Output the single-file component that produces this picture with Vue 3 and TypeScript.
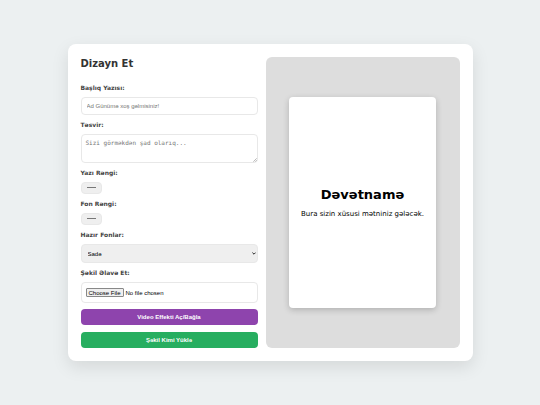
<script setup lang="ts">
import { ref } from 'vue'

const title = ref('')
const description = ref('')
const textColor = ref('#000000')
const backColor = ref('#ffffff')
const background = ref('plain')
const videoEffect = ref(false)
</script>

<template>
  <main class="page">
    <div class="card">
      <form class="controls" @submit.prevent>
        <h2>Dizayn Et</h2>

        <label for="title">Başlıq Yazısı:</label>
        <input id="title" v-model="title" class="field text" type="text" placeholder="Ad Günümə xoş gəlmisiniz!" />

        <label for="description">Təsvir:</label>
        <div class="holder">
          <textarea id="description" v-model="description" class="field area" placeholder="Sizi görməkdən şad olarıq..."></textarea>
          <svg class="grip" viewBox="0 0 4 4" aria-hidden="true">
            <path d="M0.3 3.7L3.7 0.3M2.2 3.7L3.7 2.2" fill="none" stroke="#777" stroke-width="0.5" />
          </svg>
        </div>

        <label for="text-color">Yazı Rəngi:</label>
        <input id="text-color" v-model="textColor" class="field color" type="color" />

        <label for="back-color">Fon Rəngi:</label>
        <input id="back-color" v-model="backColor" class="field color" type="color" />

        <label for="background">Hazır Fonlar:</label>
        <div class="holder">
          <select id="background" v-model="background" class="field select">
            <option value="plain">Sadə</option>
          </select>
          <svg class="arrow" viewBox="0 0 4 3" aria-hidden="true">
            <path d="M0.4 0.6L2 2.2L3.6 0.6" fill="none" stroke="#111" stroke-width="0.9" />
          </svg>
        </div>

        <label for="image">Şəkil Əlavə Et:</label>
        <input id="image" class="field file" type="file" accept="image/*" />

        <button class="action effect" type="button" @click="videoEffect = !videoEffect">Video Effekti Aç/Bağla</button>
        <button class="action save" type="button">Şəkil Kimi Yüklə</button>
      </form>

      <section class="preview">
        <article class="invitation" :style="{ color: textColor, backgroundColor: backColor }">
          <h1>{{ title || 'Dəvətnamə' }}</h1>
          <p>{{ description || 'Bura sizin xüsusi mətniniz gələcək.' }}</p>
        </article>
      </section>
    </div>
  </main>
</template>

<style>
body {
  margin: 0;
  background: #ecf0f1;
}
</style>

<style scoped>
* {
  box-sizing: border-box;
}

.page {
  min-height: 100vh;
  display: flex;
  align-items: center;
  justify-content: center;
  font-family: "DejaVu Sans", sans-serif;
}

.card {
  width: 75%;
  display: grid;
  grid-template-columns: 177fr 194fr;
  gap: 8px;
  padding: 13px;
  border-radius: 8px;
  background: #fff;
  box-shadow: 0 6px 17px rgba(0, 0, 0, 0.1);
}

.controls {
  display: flex;
  flex-direction: column;
  align-items: stretch;
  min-width: 0;
}

h2 {
  margin: 0 0 14px;
  font-size: 10px;
  line-height: 13px;
  color: #333;
}

label {
  margin-bottom: 5px;
  font-size: 6px;
  font-weight: bold;
  line-height: 8px;
  color: #444;
}

.holder {
  position: relative;
  display: flex;
}

.field {
  width: 100%;
  margin: 0 0 6px;
  border: 1px solid #e8e8e8;
  border-radius: 4px;
  background: #fff;
  font-family: "Liberation Sans", sans-serif;
  font-size: 6px;
}

.text {
  height: 18px;
  padding: 4px 5px;
}

.area {
  height: 29px;
  padding: 4px;
  font-family: "DejaVu Sans Mono", monospace;
  resize: none;
}

.grip {
  position: absolute;
  right: 1px;
  bottom: 7px;
  width: 4px;
  height: 4px;
}

.color {
  width: 21px;
  height: 12px;
  padding: 4px 5px;
  background: #efefef;
}

.color::-webkit-color-swatch-wrapper {
  padding: 0;
}

.color::-webkit-color-swatch {
  box-sizing: border-box;
  height: 1px;
  border: 0;
  border-top: 1px solid #777;
}

.select {
  height: 19px;
  padding: 0 6px;
  background: #efefef;
  color: #000;
  appearance: none;
}

.arrow {
  position: absolute;
  right: 2px;
  top: 8px;
  width: 4px;
  height: 3px;
}

.file {
  height: 21px;
  padding: 5px 4px;
  line-height: 9px;
}

.file::file-selector-button {
  height: 9px;
  margin: 0 2px 0 0;
  padding: 0 2px;
  border: 1px solid #888;
  border-radius: 1px;
  background: #efefef;
  font: 6px "Liberation Sans", sans-serif;
}

.action {
  height: 16px;
  padding: 0;
  border: 0;
  border-radius: 4px;
  color: #fff;
  font: bold 6px "Liberation Sans", sans-serif;
}

.action + .action {
  margin-top: 7px;
}

.effect {
  background: #8e44ad;
}

.save {
  background: #27ae60;
}

.preview {
  display: flex;
  align-items: center;
  justify-content: center;
  border-radius: 6px;
  background: #ddd;
}

.invitation {
  width: 76%;
  aspect-ratio: 7 / 10;
  display: flex;
  flex-direction: column;
  align-items: center;
  justify-content: center;
  border-radius: 4px;
  box-shadow: 0 2px 6px rgba(0, 0, 0, 0.2);
  text-align: center;
}

h1 {
  margin: 0 0 7px;
  font-size: 13px;
  line-height: 16px;
}

p {
  margin: 0;
  font-size: 7px;
  line-height: 8px;
}
</style>
